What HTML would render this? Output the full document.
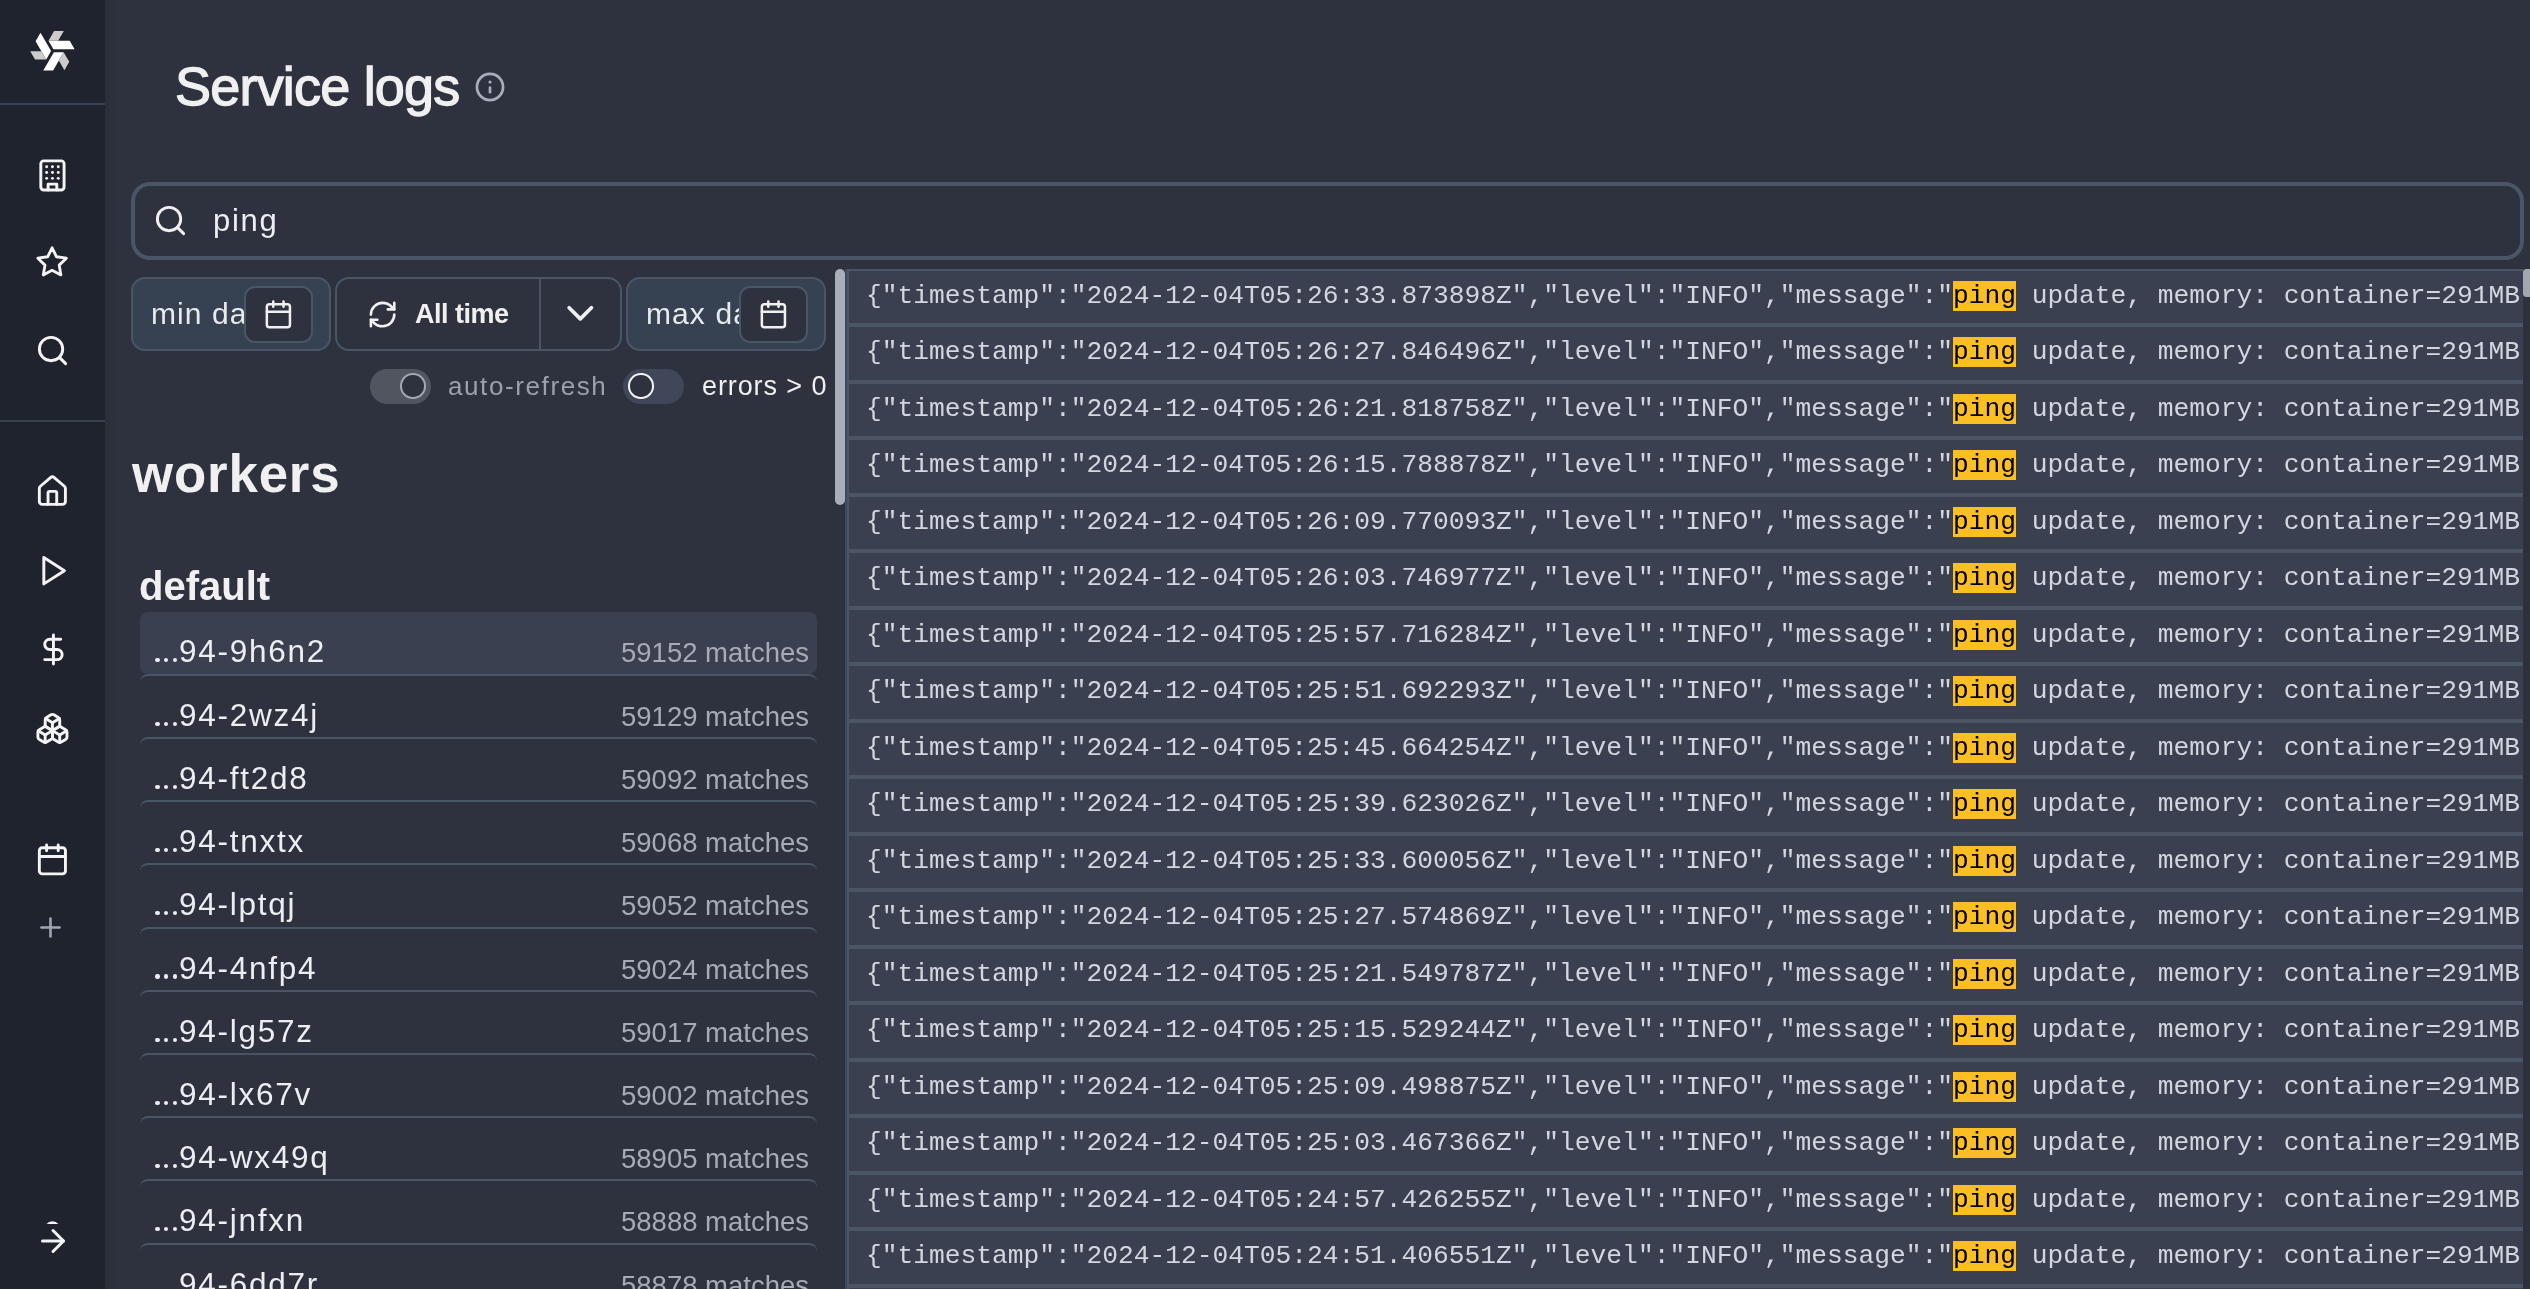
<!DOCTYPE html>
<html><head><meta charset="utf-8">
<style>
*{box-sizing:border-box;margin:0;padding:0}
html,body{width:2530px;height:1289px;overflow:hidden;background:#2d323e;font-family:"Liberation Sans",sans-serif;color:#f0f0f0;-webkit-font-smoothing:antialiased}
.abs{position:absolute}
#sb{position:absolute;left:0;top:0;width:105px;height:1289px;background:#1f232e}
#sb .ln{position:absolute;left:0;width:105px;height:2px;background:#364152}
#sb svg{position:absolute;overflow:visible}
.ico{fill:none;stroke:#f4f4f5;stroke-width:2;stroke-linecap:round;stroke-linejoin:round}
#shadow{position:absolute;left:105px;top:0;width:14px;height:1289px;background:linear-gradient(to right,rgba(0,0,0,0.07),rgba(0,0,0,0))}
.txt{position:absolute;white-space:pre;line-height:1;will-change:transform}

#logs{position:absolute;left:845px;top:268.7px;width:1678px;height:1020px;overflow:hidden;background:#2d323e}
.row{position:absolute;left:0;width:1678px;height:56.5px;border:2px solid #4a5566;border-right:none;background:#3a4050}
.lt{position:absolute;left:17.9px;top:10px;font-family:"Liberation Mono",monospace;font-size:26.26px;line-height:30px;white-space:pre;color:#d2d6de;will-change:transform}
.lt mark{background:#fbbf24;color:#000}
.dt{position:absolute;width:4.4px;height:4.4px;border-radius:50%;background:#eceef2}
</style></head>
<body>
<div id="sb">
  <svg style="left:0;top:0" width="105" height="105" viewBox="0 0 105 105">
    <g transform="translate(52.8 50.84)">
      <g><polygon fill="#ffffff" points="-4.28,-10.1 16.9,-10.1 21.8,-1.6 0.62,-1.6"/><polygon fill="#cccccc" points="1.3,-19.75 11.0,-19.75 5.35,-10.1 -4.28,-10.1"/></g>
      <g transform="rotate(120)"><polygon fill="#ffffff" points="-4.28,-10.1 16.9,-10.1 21.8,-1.6 0.62,-1.6"/><polygon fill="#cccccc" points="1.3,-19.75 11.0,-19.75 5.35,-10.1 -4.28,-10.1"/></g>
      <g transform="rotate(240)"><polygon fill="#ffffff" points="-4.28,-10.1 16.9,-10.1 21.8,-1.6 0.62,-1.6"/><polygon fill="#cccccc" points="1.3,-19.75 11.0,-19.75 5.35,-10.1 -4.28,-10.1"/></g>
    </g>
  </svg>

  <svg style="left:35.15px;top:157.95px" width="34.9" height="34.9" viewBox="0 0 24 24" class="ico"><rect width="16" height="20" x="4" y="2" rx="2" ry="2"/><path d="M9 22v-4h6v4"/><path d="M8 6h.01"/><path d="M16 6h.01"/><path d="M12 6h.01"/><path d="M12 10h.01"/><path d="M12 14h.01"/><path d="M16 10h.01"/><path d="M16 14h.01"/><path d="M8 10h.01"/><path d="M8 14h.01"/></svg>
  <svg style="left:35.3px;top:245.4px" width="34.2" height="34.2" viewBox="0 0 24 24" class="ico"><polygon points="12 2 15.09 8.26 22 9.27 17 14.14 18.18 21.02 12 17.77 5.82 21.02 7 14.14 2 9.27 8.91 8.26 12 2"/></svg>
  <svg style="left:35.2px;top:333px" width="35" height="35" viewBox="0 0 24 24" class="ico"><circle cx="11" cy="11" r="8"/><path d="m21 21-4.3-4.3"/></svg>
  <svg style="left:35.05px;top:474.1px" width="34.75" height="34.75" viewBox="0 0 24 24" class="ico"><path d="M15 21v-8a1 1 0 0 0-1-1h-4a1 1 0 0 0-1 1v8"/><path d="M3 10a2 2 0 0 1 .709-1.528l7-5.999a2 2 0 0 1 2.582 0l7 5.999A2 2 0 0 1 21 10v9a2 2 0 0 1-2 2H5a2 2 0 0 1-2-2z"/></svg>
  <svg style="left:34.9px;top:552.7px" width="35.3" height="35.3" viewBox="0 0 24 24" class="ico"><polygon points="6 3 20 12 6 21 6 3"/></svg>
  <svg style="left:35.7px;top:632.05px" width="34.9" height="34.9" viewBox="0 0 24 24" class="ico"><line x1="12" x2="12" y1="2" y2="22"/><path d="M17 5H9.5a3.5 3.5 0 0 0 0 7h5a3.5 3.5 0 0 1 0 7H6"/></svg>
  <svg style="left:35.25px;top:710.9px" width="34.9" height="34.9" viewBox="0 0 24 24" class="ico"><path d="M2.97 12.92A2 2 0 0 0 2 14.63v3.24a2 2 0 0 0 .97 1.71l3 1.8a2 2 0 0 0 2.06 0L12 19v-5.5l-5-3-4.03 2.42Z"/><path d="m7 16.5-4.74-2.85"/><path d="m7 16.5 5-3"/><path d="M7 16.5v5.17"/><path d="M12 13.5V19l3.97 2.38a2 2 0 0 0 2.06 0l3-1.8a2 2 0 0 0 .97-1.71v-3.24a2 2 0 0 0-.97-1.71L17 10.5l-5 3Z"/><path d="m17 16.5-5-3"/><path d="m17 16.5 4.74-2.85"/><path d="M17 16.5v5.17"/><path d="M7.97 4.42A2 2 0 0 0 7 6.13v4.37l5 3 5-3V6.13a2 2 0 0 0-.97-1.71l-3-1.8a2 2 0 0 0-2.06 0l-3 1.8Z"/><path d="M12 8 7.26 5.15"/><path d="m12 8 4.74-2.85"/><path d="M12 13.5V8"/></svg>
  <svg style="left:35.1px;top:842px" width="34.8" height="34.8" viewBox="0 0 24 24" class="ico"><path d="M8 2v4"/><path d="M16 2v4"/><rect width="18" height="18" x="3" y="4" rx="2"/><path d="M3 10h18"/></svg>
  <svg style="left:34.75px;top:911.8px;stroke:#a0a6b4" width="31" height="31" viewBox="0 0 24 24" class="ico"><path d="M5 12h14"/><path d="M12 5v14"/></svg>
  <svg style="left:34.6px;top:1222.7px" width="36" height="36" viewBox="0 0 24 24" class="ico"><path d="M5 12h14"/><path d="m12 5 7 7-7 7"/></svg>
  <svg style="left:0;top:1200px" width="105" height="40" viewBox="0 1200 105 40"><path d="M46.5 1224 A7.5 7.5 0 0 1 58.3 1224 Z" fill="#f4f4f5"/></svg>
  <div class="ln" style="top:103px"></div>
  <div class="ln" style="top:420px"></div>
</div>
<div id="shadow"></div>
<div class="txt" id="title" style="left:175px;top:58.5px;font-size:54px;font-weight:400;letter-spacing:-0.8px;-webkit-text-stroke:1.3px #f0f0f0;color:#f0f0f0">Service logs</div>
<svg class="abs" style="left:474.7px;top:71.5px" width="30" height="30" viewBox="0 0 30 30"><circle cx="15" cy="15" r="13.05" fill="none" stroke="#a8aebb" stroke-width="2.7"/><line x1="15" y1="15.5" x2="15" y2="20.2" stroke="#a8aebb" stroke-width="2.7" stroke-linecap="round"/><circle cx="15" cy="10" r="1.6" fill="#a8aebb"/></svg>
<div class="abs" id="search" style="left:131px;top:182px;width:2393px;height:78px;border:4px solid #4a5567;border-radius:19px;background:#2d323e"></div>
<svg class="abs ico" style="left:152.7px;top:202.5px;stroke:#f0f0f0" width="35" height="35" viewBox="0 0 24 24"><circle cx="11" cy="11" r="8"/><path d="m21 21-4.3-4.3"/></svg>
<div class="txt" style="left:213px;top:205px;font-size:31px;letter-spacing:1.7px;color:#eceef2">ping</div>


<div class="abs" style="left:131px;top:277px;width:200px;height:74px;border:2px solid #4a5568;border-radius:14px;background:#364252;overflow:hidden">
  <div class="txt" style="left:17.6px;top:20px;font-size:30px;letter-spacing:1.1px;color:#e8eaee">min date</div>
</div>
<div class="abs" style="left:244.2px;top:286.2px;width:68.6px;height:56.8px;border:2px solid #4a5568;border-radius:11px;background:#2d323e"></div>
<svg class="abs ico" style="left:262.8px;top:298.95px;stroke:#f0f0f0;stroke-width:1.95" width="30.8" height="30.8" viewBox="0 0 24 24"><path d="M8 2v4"/><path d="M16 2v4"/><rect width="18" height="18" x="3" y="4" rx="2"/><path d="M3 10h18"/></svg>
<div class="abs" style="left:335px;top:277px;width:287px;height:74px;border:2px solid #4a5568;border-radius:14px;background:#2d323e"></div>
<div class="abs" style="left:539.2px;top:278px;width:2px;height:72px;background:#4a5568"></div>
<svg class="abs ico" style="left:366.5px;top:298.7px;stroke:#f0f0f0" width="31.2" height="31.2" viewBox="0 0 24 24"><path d="M3 12a9 9 0 0 1 9-9 9.75 9.75 0 0 1 6.74 2.74L21 8"/><path d="M21 3v5h-5"/><path d="M21 12a9 9 0 0 1-9 9 9.75 9.75 0 0 1-6.74-2.74L3 16"/><path d="M8 16H3v5"/></svg>
<div class="txt" style="left:415px;top:301px;font-size:27px;font-weight:700;letter-spacing:-0.5px;color:#f0f0f0">All time</div>
<svg class="abs ico" style="left:557.5px;top:291.3px;stroke:#f0f0f0" width="44.6" height="44.6" viewBox="0 0 24 24"><path d="m6 9 6 6 6-6"/></svg>
<div class="abs" style="left:626.2px;top:277px;width:199.5px;height:74px;border:2px solid #4a5568;border-radius:14px;background:#364252;overflow:hidden">
  <div class="txt" style="left:17.8px;top:20px;font-size:30px;letter-spacing:1.1px;color:#e8eaee">max date</div>
</div>
<div class="abs" style="left:739.4px;top:286.3px;width:68.8px;height:56.7px;border:2px solid #4a5568;border-radius:11px;background:#2d323e"></div>
<svg class="abs ico" style="left:757.65px;top:298.8px;stroke:#f0f0f0;stroke-width:1.95" width="30.8" height="30.8" viewBox="0 0 24 24"><path d="M8 2v4"/><path d="M16 2v4"/><rect width="18" height="18" x="3" y="4" rx="2"/><path d="M3 10h18"/></svg>
<div class="abs" style="left:369.7px;top:368.9px;width:61.2px;height:34.8px;border-radius:17.4px;background:#50555f"></div>
<div class="abs" style="left:400.2px;top:373.2px;width:25.6px;height:25.6px;border-radius:50%;border:2.4px solid #a3a8b1;background:#2d323e"></div>
<div class="txt" style="left:448px;top:373px;font-size:26px;letter-spacing:1.6px;color:#9ba1ab">auto-refresh</div>
<div class="abs" style="left:623.2px;top:368.9px;width:60.8px;height:35px;border-radius:17.5px;background:#3f4759"></div>
<div class="abs" style="left:628.1px;top:373.2px;width:25.6px;height:25.6px;border-radius:50%;border:2.4px solid #f4f4f5;background:#2d323e"></div>
<div class="txt" style="left:702px;top:373px;font-size:27px;letter-spacing:0.9px;color:#f0f0f0">errors &gt; 0</div>

<div class="txt" style="left:132px;top:448px;font-size:52.8px;font-weight:700;letter-spacing:0.85px;color:#f0f0f0">workers</div>
<div class="txt" style="left:139px;top:566px;font-size:40px;font-weight:700;color:#f0f0f0">default</div>
<div class="abs" style="left:835px;top:269px;width:10px;height:236px;border-radius:5px;background:#a9aeb8"></div>
<div class="abs" style="left:130px;top:600px;width:700px;height:689px;overflow:hidden">
<div class="abs" style="left:10px;top:11.80px;width:677px;height:62px;border-radius:8px;background:#3a4050"></div>
<div class="dt" style="left:25.40px;top:57.70px"></div><div class="dt" style="left:34.10px;top:57.70px"></div><div class="dt" style="left:42.80px;top:57.70px"></div><div class="txt" style="left:48.5px;top:36.00px;font-size:31.5px;letter-spacing:1.73px;color:#eceef2">94-9h6n2</div>
<div class="txt" style="right:21px;top:39.00px;font-size:27.5px;color:#a6abb5">59152 matches</div>
<div class="abs" style="left:10px;top:73.80px;width:677px;height:63.2px;border-top:2px solid #4a5568;border-radius:8px"></div>
<div class="dt" style="left:25.40px;top:121.50px"></div><div class="dt" style="left:34.10px;top:121.50px"></div><div class="dt" style="left:42.80px;top:121.50px"></div><div class="txt" style="left:48.5px;top:99.80px;font-size:31.5px;letter-spacing:1.73px;color:#eceef2">94-2wz4j</div>
<div class="txt" style="right:21px;top:102.80px;font-size:27.5px;color:#a6abb5">59129 matches</div>
<div class="abs" style="left:10px;top:137.00px;width:677px;height:63.2px;border-top:2px solid #4a5568;border-radius:8px"></div>
<div class="dt" style="left:25.40px;top:184.70px"></div><div class="dt" style="left:34.10px;top:184.70px"></div><div class="dt" style="left:42.80px;top:184.70px"></div><div class="txt" style="left:48.5px;top:163.00px;font-size:31.5px;letter-spacing:1.73px;color:#eceef2">94-ft2d8</div>
<div class="txt" style="right:21px;top:166.00px;font-size:27.5px;color:#a6abb5">59092 matches</div>
<div class="abs" style="left:10px;top:200.20px;width:677px;height:63.2px;border-top:2px solid #4a5568;border-radius:8px"></div>
<div class="dt" style="left:25.40px;top:247.90px"></div><div class="dt" style="left:34.10px;top:247.90px"></div><div class="dt" style="left:42.80px;top:247.90px"></div><div class="txt" style="left:48.5px;top:226.20px;font-size:31.5px;letter-spacing:1.73px;color:#eceef2">94-tnxtx</div>
<div class="txt" style="right:21px;top:229.20px;font-size:27.5px;color:#a6abb5">59068 matches</div>
<div class="abs" style="left:10px;top:263.40px;width:677px;height:63.2px;border-top:2px solid #4a5568;border-radius:8px"></div>
<div class="dt" style="left:25.40px;top:311.10px"></div><div class="dt" style="left:34.10px;top:311.10px"></div><div class="dt" style="left:42.80px;top:311.10px"></div><div class="txt" style="left:48.5px;top:289.40px;font-size:31.5px;letter-spacing:1.73px;color:#eceef2">94-lptqj</div>
<div class="txt" style="right:21px;top:292.40px;font-size:27.5px;color:#a6abb5">59052 matches</div>
<div class="abs" style="left:10px;top:326.60px;width:677px;height:63.2px;border-top:2px solid #4a5568;border-radius:8px"></div>
<div class="dt" style="left:25.40px;top:374.30px"></div><div class="dt" style="left:34.10px;top:374.30px"></div><div class="dt" style="left:42.80px;top:374.30px"></div><div class="txt" style="left:48.5px;top:352.60px;font-size:31.5px;letter-spacing:1.73px;color:#eceef2">94-4nfp4</div>
<div class="txt" style="right:21px;top:355.60px;font-size:27.5px;color:#a6abb5">59024 matches</div>
<div class="abs" style="left:10px;top:389.80px;width:677px;height:63.2px;border-top:2px solid #4a5568;border-radius:8px"></div>
<div class="dt" style="left:25.40px;top:437.50px"></div><div class="dt" style="left:34.10px;top:437.50px"></div><div class="dt" style="left:42.80px;top:437.50px"></div><div class="txt" style="left:48.5px;top:415.80px;font-size:31.5px;letter-spacing:1.73px;color:#eceef2">94-lg57z</div>
<div class="txt" style="right:21px;top:418.80px;font-size:27.5px;color:#a6abb5">59017 matches</div>
<div class="abs" style="left:10px;top:453.00px;width:677px;height:63.2px;border-top:2px solid #4a5568;border-radius:8px"></div>
<div class="dt" style="left:25.40px;top:500.70px"></div><div class="dt" style="left:34.10px;top:500.70px"></div><div class="dt" style="left:42.80px;top:500.70px"></div><div class="txt" style="left:48.5px;top:479.00px;font-size:31.5px;letter-spacing:1.73px;color:#eceef2">94-lx67v</div>
<div class="txt" style="right:21px;top:482.00px;font-size:27.5px;color:#a6abb5">59002 matches</div>
<div class="abs" style="left:10px;top:516.20px;width:677px;height:63.2px;border-top:2px solid #4a5568;border-radius:8px"></div>
<div class="dt" style="left:25.40px;top:563.90px"></div><div class="dt" style="left:34.10px;top:563.90px"></div><div class="dt" style="left:42.80px;top:563.90px"></div><div class="txt" style="left:48.5px;top:542.20px;font-size:31.5px;letter-spacing:1.73px;color:#eceef2">94-wx49q</div>
<div class="txt" style="right:21px;top:545.20px;font-size:27.5px;color:#a6abb5">58905 matches</div>
<div class="abs" style="left:10px;top:579.40px;width:677px;height:63.2px;border-top:2px solid #4a5568;border-radius:8px"></div>
<div class="dt" style="left:25.40px;top:627.10px"></div><div class="dt" style="left:34.10px;top:627.10px"></div><div class="dt" style="left:42.80px;top:627.10px"></div><div class="txt" style="left:48.5px;top:605.40px;font-size:31.5px;letter-spacing:1.73px;color:#eceef2">94-jnfxn</div>
<div class="txt" style="right:21px;top:608.40px;font-size:27.5px;color:#a6abb5">58888 matches</div>
<div class="abs" style="left:10px;top:642.60px;width:677px;height:63.2px;border-top:2px solid #4a5568;border-radius:8px"></div>
<div class="dt" style="left:25.40px;top:690.30px"></div><div class="dt" style="left:34.10px;top:690.30px"></div><div class="dt" style="left:42.80px;top:690.30px"></div><div class="txt" style="left:48.5px;top:668.60px;font-size:31.5px;letter-spacing:1.73px;color:#eceef2">94-6dd7r</div>
<div class="txt" style="right:21px;top:671.60px;font-size:27.5px;color:#a6abb5">58878 matches</div>
</div>
<div id="logs">
<div class="abs" style="left:0;top:0;width:1.5px;height:1020px;background:#3b4a5e"></div>
<div class="row" style="left:1.5px;top:0.00px"><div class="lt">{"timestamp":"2024-12-04T05:26:33.873898Z","level":"INFO","message":"<mark>ping</mark> update, memory: container=291MB"}</div></div>
<div class="row" style="left:1.5px;top:56.50px"><div class="lt">{"timestamp":"2024-12-04T05:26:27.846496Z","level":"INFO","message":"<mark>ping</mark> update, memory: container=291MB"}</div></div>
<div class="row" style="left:1.5px;top:113.00px"><div class="lt">{"timestamp":"2024-12-04T05:26:21.818758Z","level":"INFO","message":"<mark>ping</mark> update, memory: container=291MB"}</div></div>
<div class="row" style="left:1.5px;top:169.50px"><div class="lt">{"timestamp":"2024-12-04T05:26:15.788878Z","level":"INFO","message":"<mark>ping</mark> update, memory: container=291MB"}</div></div>
<div class="row" style="left:1.5px;top:226.00px"><div class="lt">{"timestamp":"2024-12-04T05:26:09.770093Z","level":"INFO","message":"<mark>ping</mark> update, memory: container=291MB"}</div></div>
<div class="row" style="left:1.5px;top:282.50px"><div class="lt">{"timestamp":"2024-12-04T05:26:03.746977Z","level":"INFO","message":"<mark>ping</mark> update, memory: container=291MB"}</div></div>
<div class="row" style="left:1.5px;top:339.00px"><div class="lt">{"timestamp":"2024-12-04T05:25:57.716284Z","level":"INFO","message":"<mark>ping</mark> update, memory: container=291MB"}</div></div>
<div class="row" style="left:1.5px;top:395.50px"><div class="lt">{"timestamp":"2024-12-04T05:25:51.692293Z","level":"INFO","message":"<mark>ping</mark> update, memory: container=291MB"}</div></div>
<div class="row" style="left:1.5px;top:452.00px"><div class="lt">{"timestamp":"2024-12-04T05:25:45.664254Z","level":"INFO","message":"<mark>ping</mark> update, memory: container=291MB"}</div></div>
<div class="row" style="left:1.5px;top:508.50px"><div class="lt">{"timestamp":"2024-12-04T05:25:39.623026Z","level":"INFO","message":"<mark>ping</mark> update, memory: container=291MB"}</div></div>
<div class="row" style="left:1.5px;top:565.00px"><div class="lt">{"timestamp":"2024-12-04T05:25:33.600056Z","level":"INFO","message":"<mark>ping</mark> update, memory: container=291MB"}</div></div>
<div class="row" style="left:1.5px;top:621.50px"><div class="lt">{"timestamp":"2024-12-04T05:25:27.574869Z","level":"INFO","message":"<mark>ping</mark> update, memory: container=291MB"}</div></div>
<div class="row" style="left:1.5px;top:678.00px"><div class="lt">{"timestamp":"2024-12-04T05:25:21.549787Z","level":"INFO","message":"<mark>ping</mark> update, memory: container=291MB"}</div></div>
<div class="row" style="left:1.5px;top:734.50px"><div class="lt">{"timestamp":"2024-12-04T05:25:15.529244Z","level":"INFO","message":"<mark>ping</mark> update, memory: container=291MB"}</div></div>
<div class="row" style="left:1.5px;top:791.00px"><div class="lt">{"timestamp":"2024-12-04T05:25:09.498875Z","level":"INFO","message":"<mark>ping</mark> update, memory: container=291MB"}</div></div>
<div class="row" style="left:1.5px;top:847.50px"><div class="lt">{"timestamp":"2024-12-04T05:25:03.467366Z","level":"INFO","message":"<mark>ping</mark> update, memory: container=291MB"}</div></div>
<div class="row" style="left:1.5px;top:904.00px"><div class="lt">{"timestamp":"2024-12-04T05:24:57.426255Z","level":"INFO","message":"<mark>ping</mark> update, memory: container=291MB"}</div></div>
<div class="row" style="left:1.5px;top:960.50px"><div class="lt">{"timestamp":"2024-12-04T05:24:51.406551Z","level":"INFO","message":"<mark>ping</mark> update, memory: container=291MB"}</div></div>
<div class="row" style="left:1.5px;top:1017.00px"><div class="lt">{"timestamp":"2024-12-04T05:24:45.386540Z","level":"INFO","message":"<mark>ping</mark> update, memory: container=291MB"}</div></div>
</div>
<div class="abs" style="left:2523px;top:269px;width:7px;height:1020px;background:#2d313c"></div>
<div class="abs" style="left:2523px;top:269.2px;width:12px;height:27.8px;border-radius:3.5px;background:#a3a8b0"></div>
</body></html>
